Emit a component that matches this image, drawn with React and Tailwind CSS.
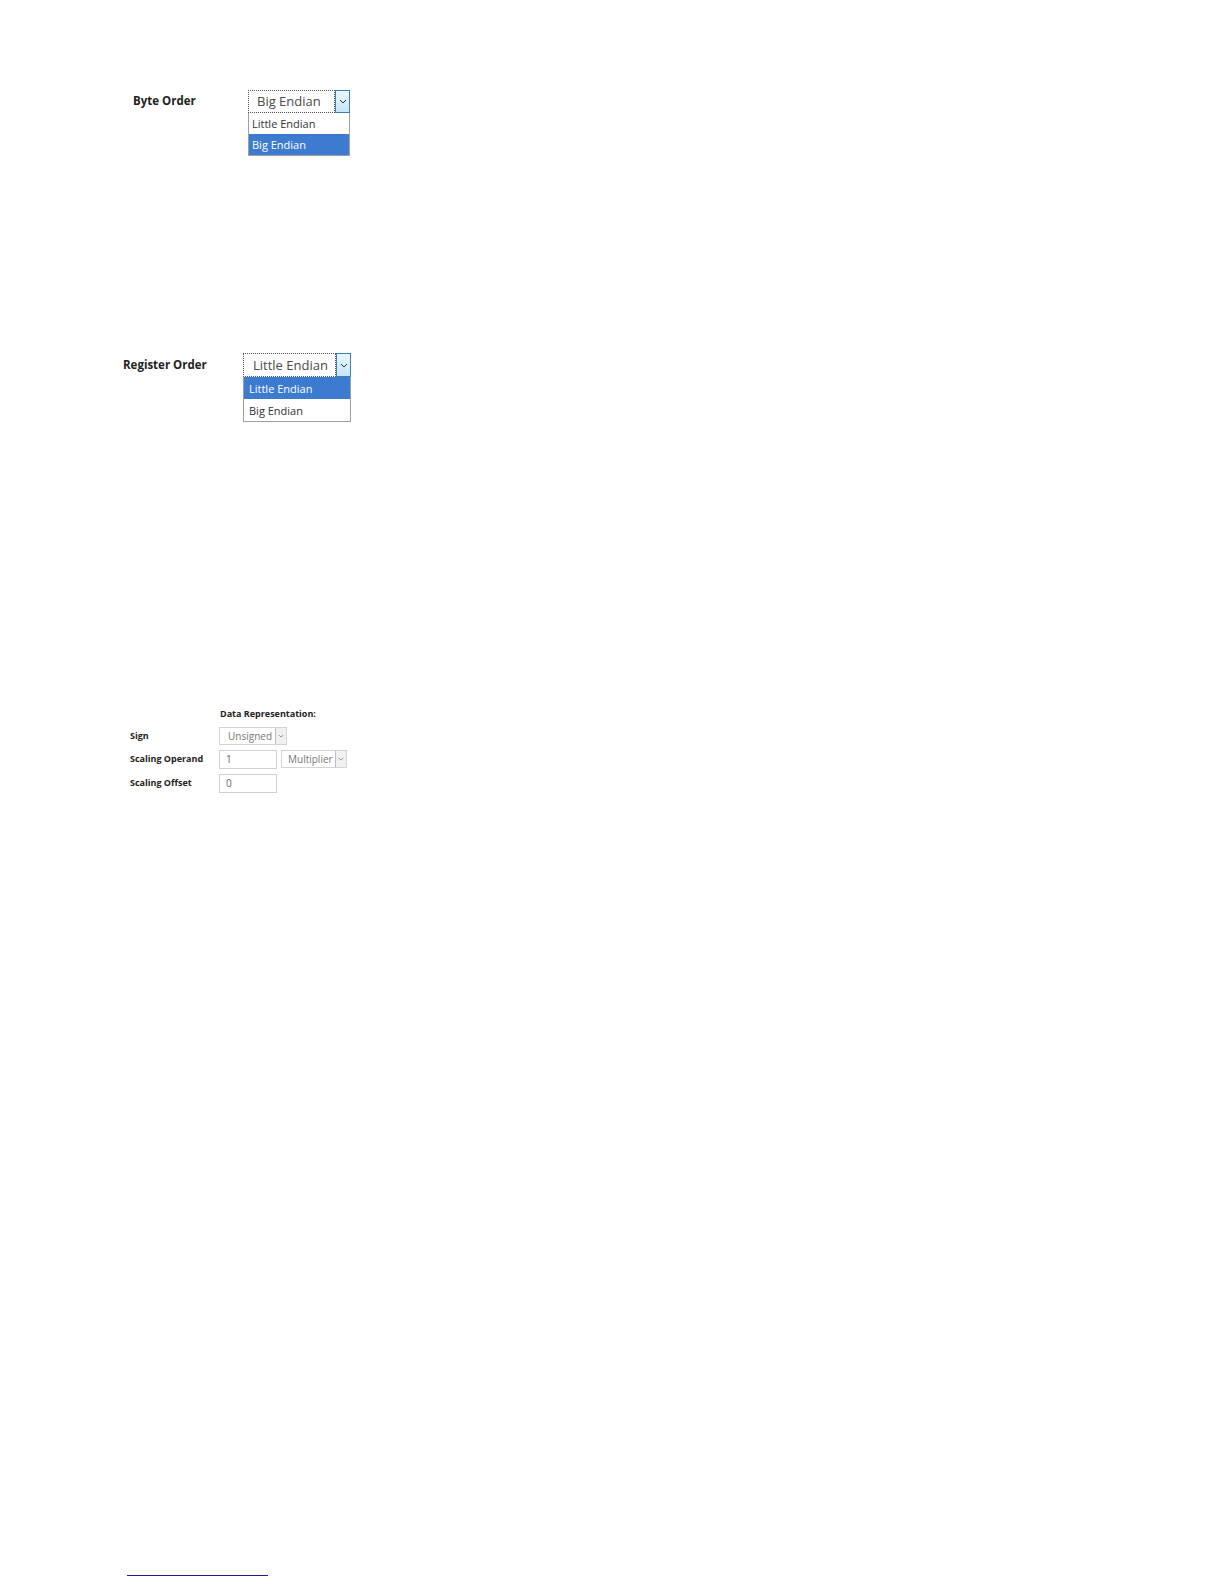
import React from 'react'

const labelFont = { fontFamily: '"Open Sans", "Noto Sans", sans-serif' }

function Chevron({ className = 'w-[8px] h-[5px]', color = '#4a4a4a' }) {
    return (
        <svg viewBox="0 0 8 5" className={className}>
            <path d="M1 1l3 3 3-3" fill="none" stroke={color} strokeWidth="1" />
        </svg>
    )
}

// Open dropdown, focused look (dotted ring + blue arrow button)
function OpenSelect({ value, options, selected, width, pad, itemPad, itemH, boxH }) {
    return (
        <div className="flex flex-col" style={{ width }}>
            <div className="flex" style={{ height: boxH }}>
                <div
                    className="flex-1 flex items-center border border-dotted border-[#555] text-[13px] text-[#4a4a4a] leading-none"
                    style={{ paddingLeft: pad }}
                >
                    {value}
                </div>
                <div className="w-[15px] flex items-center justify-center border border-[#3c7fb1] bg-gradient-to-b from-[#eaf6fd] to-[#c4e5f6]">
                    <Chevron color="#333" />
                </div>
            </div>
            <div className="flex flex-col border border-[#a0a0a0] border-t-0">
                {options.map((o) => (
                    <div
                        key={o}
                        className={`flex items-center text-[11px] leading-none ${o === selected ? 'bg-[#3c7bd0] text-white' : 'bg-white text-[#333]'}`}
                        style={{ paddingLeft: itemPad, height: itemH }}
                    >
                        {o}
                    </div>
                ))}
            </div>
        </div>
    )
}

function SmallSelect({ value, width, pad }) {
    return (
        <div className="flex h-[18px] border border-[#d4d4d4] bg-white font-normal" style={{ width }}>
            <div className="flex-1 flex items-center text-[10px] text-[#777] leading-none" style={{ paddingLeft: pad }}>
                {value}
            </div>
            <div className="w-[11px] flex items-center justify-center border-l border-[#bdbdbd] bg-[#f0f0f0]">
                <Chevron className="w-[6px] h-[4px]" color="#777" />
            </div>
        </div>
    )
}

function TextBox({ value }) {
    return (
        <div className="w-[58px] h-[19px] flex items-center pl-[6px] border border-[#d0d0d0] text-[10px] font-normal text-[#666] leading-none">
            {value}
        </div>
    )
}

export default function App() {
    return (
        <div className="min-h-[1584px] bg-white flex flex-col" style={labelFont}>
            {/* Byte Order */}
            <div className="flex pt-[90px] pl-[133px]">
                <div className="w-[115px] pt-[2px] text-[11.5px] font-bold text-[#222]">Byte Order</div>
                <OpenSelect
                    value="Big Endian"
                    options={['Little Endian', 'Big Endian']}
                    selected="Big Endian"
                    width={102}
                    pad={8}
                    itemPad={3}
                    itemH={21}
                    boxH={23}
                />
            </div>

            {/* Register Order */}
            <div className="flex mt-[197px] pl-[123px]">
                <div className="w-[120px] pt-[3px] text-[11.5px] font-bold text-[#222]">Register Order</div>
                <OpenSelect
                    value="Little Endian"
                    options={['Little Endian', 'Big Endian']}
                    selected="Little Endian"
                    width={108}
                    pad={9}
                    itemPad={5}
                    itemH={22}
                    boxH={24}
                />
            </div>

            {/* Data Representation */}
            <div className="mt-[285px] pl-[130px] grid grid-cols-[89px_auto] gap-y-[5px] items-center text-[9px] font-bold text-[#222]">
                <div />
                <div className="pl-[1px] mb-[1px]">Data Representation:</div>

                <div>Sign</div>
                <SmallSelect value="Unsigned" width={68} pad={8} />

                <div>Scaling Operand</div>
                <div className="flex gap-[4px] items-center">
                    <TextBox value="1" />
                    <SmallSelect value="Multiplier" width={66} pad={6} />
                </div>

                <div>Scaling Offset</div>
                <TextBox value="0" />
            </div>

            {/* footnote rule */}
            <div className="mt-auto mb-[8px] ml-[127px] w-[141px] h-px bg-[#1c1c96]" />
        </div>
    )
}
